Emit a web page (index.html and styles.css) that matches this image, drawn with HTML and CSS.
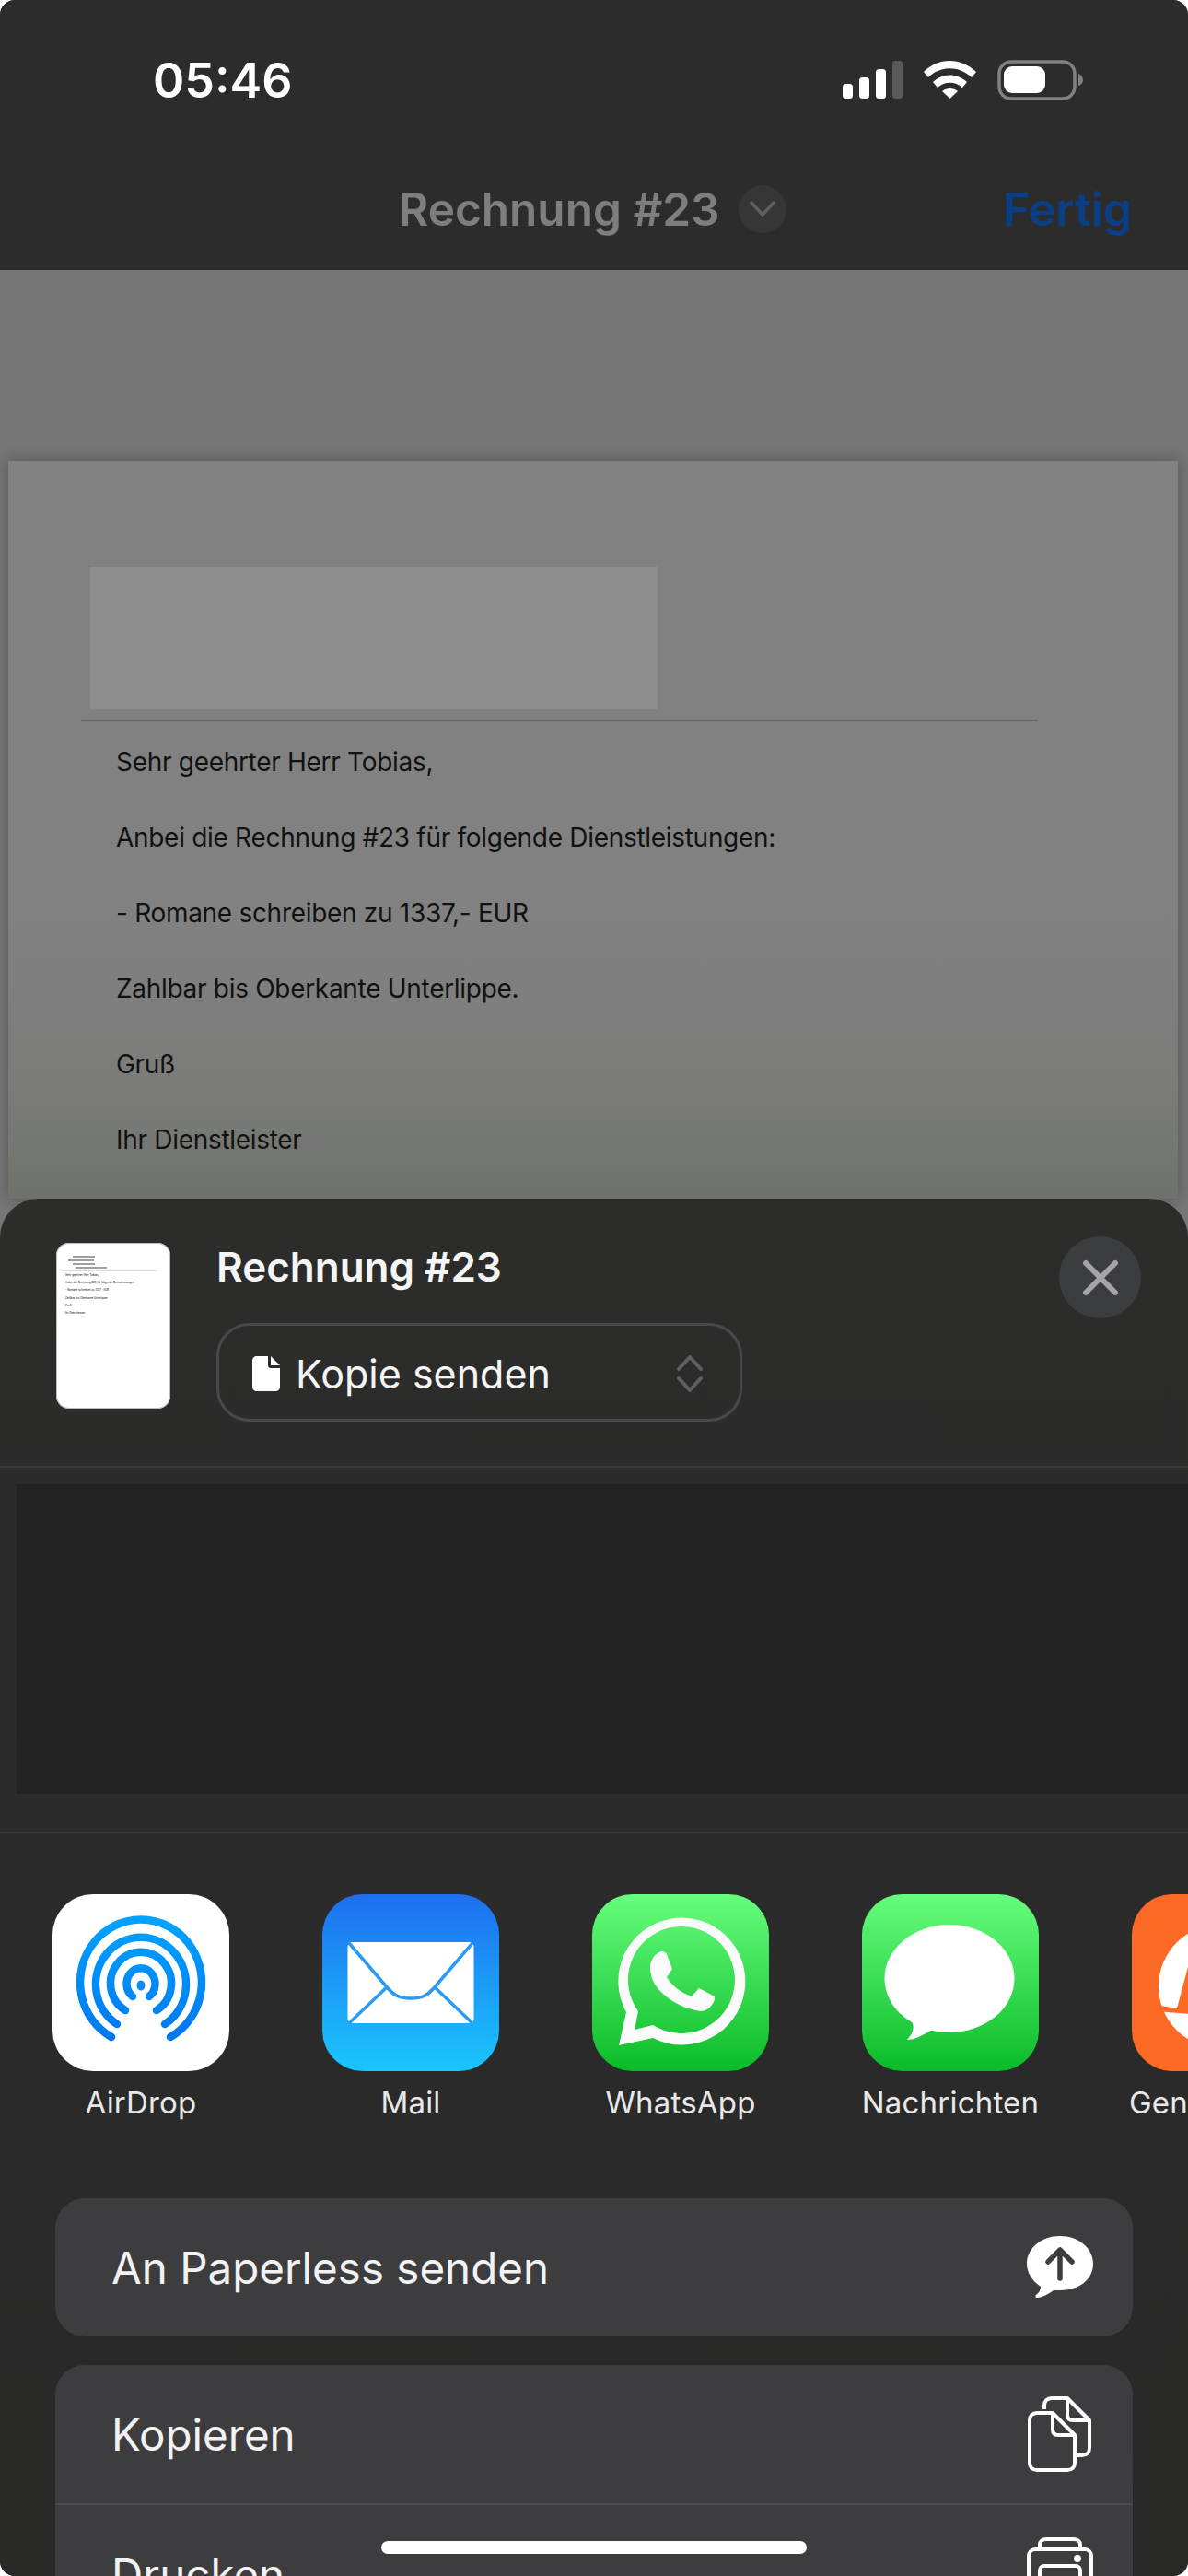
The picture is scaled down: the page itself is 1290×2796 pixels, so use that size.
FILE: index.html
```html
<!DOCTYPE html>
<html lang="de">
<head>
  <meta charset="UTF-8" />
  <meta name="viewport" content="width=device-width, initial-scale=1.0" />
  <title>Rechnung #23</title>
  <link rel="stylesheet" href="styles.css">
</head>
<body>
  <div class="screen">
    <header class="top">
      <div class="status">
        <span class="time">05:46</span>
        <svg class="status-icons" width="262" height="44" viewBox="0 0 262 44">
          <rect x="0" y="26" width="11" height="16" rx="3.5" fill="#fff"/>
          <rect x="18" y="19" width="11" height="23" rx="3.5" fill="#fff"/>
          <rect x="36" y="10" width="11" height="32" rx="3.5" fill="#fff"/>
          <rect x="54" y="1" width="11" height="41" rx="3.5" fill="#5a5a5a"/>
          <path d="M88 13 C104 -3 128 -3 145 13 L140 19 C126 6 106 6 93 19 Z M98 24 C109 14 124 14 135 24 L130 30 C122 23 111 23 103 30 Z M108 34 C113 30 120 30 125 34 L116.500 42 Z" fill="#fff"/>
          <rect x="170" y="2" width="82" height="40" rx="13" fill="none" stroke="#808080" stroke-width="3.500"/>
          <rect x="175" y="7" width="45" height="29" rx="9" fill="#fff"/>
          <path d="M256 15 C259 16 261 19 261 22 C261 25 259 27 256 28 Z" fill="#808080"/>
        </svg>
      </div>
      <div class="nav">
        <div class="nav-title">
          <span>Rechnung #23</span>
          <span class="nav-chevron">
            <svg width="30" height="18" viewBox="0 0 30 18"><path d="M3 2 L15 15 L27 2" fill="none" stroke="#5f5f5f" stroke-width="3.500" stroke-linecap="round" stroke-linejoin="round"/></svg>
          </span>
        </div>
        <span class="nav-done">Fertig</span>
      </div>
    </header>

    <main class="viewer">
      <article class="doc">
        <div class="doc-logo"></div>
        <hr class="doc-rule">
        <p>Sehr geehrter Herr Tobias,</p>
        <p>Anbei die Rechnung #23 für folgende Dienstleistungen:</p>
        <p>- Romane schreiben zu 1337,- EUR</p>
        <p>Zahlbar bis Oberkante Unterlippe.</p>
        <p>Gruß</p>
        <p>Ihr Dienstleister</p>
      </article>
    </main>

    <section class="sheet">
      <div class="sheet-head">
        <div class="thumb">
          <div class="thumb-addr"></div>
          <div class="thumb-addr short"></div>
          <div class="thumb-addr"></div>
          <div class="thumb-addr wide"></div>
          <hr class="thumb-rule">
          <p>Sehr geehrter Herr Tobias,</p>
          <p>Anbei die Rechnung #23 für folgende Dienstleistungen:</p>
          <p>- Romane schreiben zu 1337,- EUR</p>
          <p>Zahlbar bis Oberkante Unterlippe.</p>
          <p>Gruß</p>
          <p>Ihr Dienstleister</p>
        </div>
        <div class="head-info">
          <div class="head-title">Rechnung #23</div>
          <div class="mode-pill">
            <svg width="30" height="38" viewBox="0 0 30 38"><path d="M5 0 H17 V10 C17 12 18 13 20 13 H30 V33 C30 36 28 38 25 38 H5 C2 38 0 36 0 33 V5 C0 2 2 0 5 0 Z M20 0 L30 10 H20 Z" fill="#fff"/></svg>
            <span>Kopie senden</span>
            <svg class="mode-arrows" width="28" height="40" viewBox="0 0 28 40"><path d="M2 15 L14 2 L26 15 M2 25 L14 38 L26 25" fill="none" stroke="#5f5f61" stroke-width="4" stroke-linecap="round" stroke-linejoin="round"/></svg>
          </div>
        </div>
        <button class="close-btn">
          <svg width="40" height="40" viewBox="0 0 40 40"><path d="M4 4 L36 36 M36 4 L4 36" fill="none" stroke="#a5a5a8" stroke-width="6" stroke-linecap="round"/></svg>
        </button>
      </div>

      <div class="people">
        <div class="people-box"></div>
      </div>

      <div class="apps">
        <div class="app">
          <svg class="app-icon" viewBox="0 0 192 192">
            <defs>
              <linearGradient id="airBlue" gradientUnits="userSpaceOnUse" x1="0" y1="30" x2="0" y2="160">
                <stop offset="0" stop-color="#00a2ff"/>
                <stop offset="1" stop-color="#0076ee"/>
              </linearGradient>
            </defs>
            <rect width="192" height="192" rx="44" fill="#fff"/>
            <g fill="none" stroke="url(#airBlue)" stroke-width="8.500" stroke-linecap="round">
              <path d="M64 155 A66 68 0 1 1 128 155"/>
              <path d="M70 141 A49 51 0 1 1 122 141"/>
              <path d="M79 126 A33 34 0 1 1 113 126"/>
              <path d="M87 111 A15.500 17 0 1 1 105 111"/>
            </g>
            <ellipse cx="96" cy="99" rx="4.500" ry="5.500" fill="#0a8cf8"/>
          </svg>
          <span class="app-label">AirDrop</span>
        </div>
        <div class="app">
          <svg class="app-icon" viewBox="0 0 192 192">
            <defs>
              <linearGradient id="mailBlue" x1="0" y1="0" x2="0" y2="1">
                <stop offset="0" stop-color="#1e6ff0"/>
                <stop offset="1" stop-color="#1ac6fd"/>
              </linearGradient>
            </defs>
            <rect width="192" height="192" rx="44" fill="url(#mailBlue)"/>
            <rect x="27.500" y="52" width="137" height="88" rx="5" fill="#fff"/>
            <path d="M29 53 L71 102 C78 110 84 113 96 113 C108 113 114 110 121 102 L163 53 M71 100 L29 140 M121 100 L163 140" fill="none" stroke="#2a9af3" stroke-width="3.500"/>
          </svg>
          <span class="app-label">Mail</span>
        </div>
        <div class="app">
          <svg class="app-icon" viewBox="0 0 192 192">
            <defs>
              <linearGradient id="appGreen" x1="0" y1="0" x2="0" y2="1">
                <stop offset="0" stop-color="#66fd7c"/>
                <stop offset="1" stop-color="#0bbb29"/>
              </linearGradient>
            </defs>
            <rect width="192" height="192" rx="44" fill="url(#appGreen)"/>
            <path d="M29 164 L37 128 A69 69 0 1 1 66 156 Z M50 127 L46 147 L66 142 A58 58 0 1 0 50 127 Z" fill="#fafafa" fill-rule="evenodd"/>
            <path d="M75 62 C78 62 80 63 81 65 L87 81 L81 90 C87 100 97 107 108 111 L116 102 L133 111 C134 118 126 127 118 127 C92 124 66 104 64 87 C61 78 64 66 75 62 Z" fill="#fafafa"/>
          </svg>
          <span class="app-label">WhatsApp</span>
        </div>
        <div class="app">
          <svg class="app-icon" viewBox="0 0 192 192">
            <rect width="192" height="192" rx="44" fill="url(#appGreen)"/>
            <ellipse cx="95" cy="91.500" rx="70.500" ry="58.500" fill="#fff"/>
            <path d="M54 138 C58 146 54 152 49 158 C58 158 66 153 76 147 Z" fill="#fff"/>
          </svg>
          <span class="app-label">Nachrichten</span>
        </div>
        <div class="app">
          <svg class="app-icon" viewBox="0 0 192 192">
            <rect width="192" height="192" rx="44" fill="#fd6a25"/>
            <circle cx="96" cy="100" r="67" fill="#fff"/>
            <path d="M20 119 L49 124 L66 60 L130 60 L130 135 L38 128 L20 126 Z" fill="#fd6a25"/>
          </svg>
          <span class="app-label">Genius Scan</span>
        </div>
      </div>

      <div class="action-group">
        <div class="action">
          <span>An Paperless senden</span>
          <svg class="action-icon" width="72" height="68" viewBox="0 0 72 68">
            <path d="M36 0 C56 0 72 13 72 30 C72 47 57 59 36 59 C33 59 31 59 29 59 C23 63 17 67 11 67 C9 67 9 65 10 64 C13 62 15 59 15 55 C6 49 0 40 0 30 C0 13 16 0 36 0 Z" fill="#fff"/>
            <path d="M36 46 V15 M23 28 L36 15 L49 28" fill="none" stroke="#3d3d3f" stroke-width="5.500" stroke-linecap="round" stroke-linejoin="round"/>
          </svg>
        </div>
      </div>

      <div class="action-group">
        <div class="action">
          <span>Kopieren</span>
          <svg class="action-icon" width="72" height="82" viewBox="0 0 72 82">
            <g fill="none" stroke="#fff" stroke-width="4" stroke-linejoin="round">
              <path d="M19 14 V10 C19 5 22 2 27 2 H44 L68 26 V56 C68 61 65 64 60 64 H53"/>
              <path d="M44 2 V20 C44 24 46 26 50 26 H68"/>
              <path d="M11 18 H28 L52 42 V72 C52 77 49 80 44 80 H11 C6 80 3 77 3 72 V26 C3 21 6 18 11 18 Z" fill="#3d3d3f"/>
              <path d="M28 18 V36 C28 40 30 42 34 42 H52"/>
            </g>
          </svg>
        </div>
        <div class="action">
          <span>Drucken</span>
          <svg class="action-icon" width="72" height="80" viewBox="0 0 72 80">
            <g fill="none" stroke="#fff" stroke-width="4" stroke-linejoin="round">
              <path d="M14 12 V8 C14 4 17 2 21 2 H51 C55 2 58 4 58 8 V12"/>
              <rect x="2" y="13" width="68" height="52" rx="7"/>
              <rect x="14" y="31" width="44" height="40" rx="5" fill="#3d3d3f"/>
            </g>
            <circle cx="55" cy="23" r="4" fill="#fff"/>
          </svg>
        </div>
      </div>
    </section>

    <div class="home-bar"></div>
  </div>
</body>
</html>
```

FILE: styles.css
```css
/* Seite */
body {
  margin: 0;
  background-color: #fff;
  font-family: Inter, "Noto Sans", sans-serif;
}

.screen {
  position: relative;
  width: 1290px;
  height: 2796px;
  border-radius: 16px;
  overflow: hidden;
  background-color: #767676;
}

/* Statusleiste und Navigation */
.top {
  height: 293px;
  background-color: #2c2c2c;
}

.status {
  display: flex;
  justify-content: space-between;
  align-items: center;
  padding: 54px 113px 0 166px;
  height: 66px;
}

.time {
  color: #fff;
  font-size: 52px;
  font-weight: 600;
}

.nav {
  position: relative;
  display: flex;
  justify-content: flex-end;
  align-items: center;
  margin-top: 73px;
  height: 68px;
  padding-right: 61px;
}

.nav-title {
  position: absolute;
  left: 433px;
  display: flex;
  align-items: center;
  gap: 20px;
  color: #7e7e7e;
  font-size: 49.500px;
  font-weight: 600;
}

.nav-chevron {
  display: flex;
  align-items: center;
  justify-content: center;
  width: 52px;
  height: 52px;
  border-radius: 50%;
  background-color: #363636;
}

.nav-done {
  color: #0a3f85;
  font-size: 50px;
  font-weight: 600;
}

/* Dokument */
.viewer {
  padding: 207px 11px 0 9px;
}

.doc {
  height: 686px;
  padding: 115px 0 0 89px;
  background-image: linear-gradient(to bottom, #818181, #818181 60%, #7b7c7a 85%, #6e726c 100%);
  box-shadow: 0 0 16px rgba(0, 0, 0, 0.3);
  color: #111;
  font-size: 28px;
  letter-spacing: -0.3px;
}

.doc-logo {
  width: 616px;
  height: 155px;
  background-color: #8e8e8e;
}

.doc-rule {
  width: 1039px;
  margin: 11px 0 3px -10px;
  border: none;
  border-top: 2px solid #666;
}

.doc p {
  margin: 0 0 0 28px;
  height: 82px;
  line-height: 82px;
}

/* Freigabe-Blatt */
.sheet {
  position: absolute;
  top: 1301px;
  left: 0;
  right: 0;
  bottom: 0;
  border-radius: 42px 42px 0 0;
  background-image: linear-gradient(to bottom, #2c2c2b, #2b2b2b 50%, #282827);
  overflow: hidden;
}

.sheet-head {
  display: flex;
  align-items: flex-start;
  height: 249px;
  padding: 41px 51px 0 61px;
  border-bottom: 2px solid #3c3c3c;
}

.thumb {
  box-sizing: border-box;
  width: 124px;
  height: 180px;
  margin-top: 7px;
  padding: 14px 10px 0;
  border-radius: 14px;
  background-color: #fff;
  box-shadow: inset 0 0 0 1px #bbb;
  overflow: hidden;
}

.thumb-addr {
  width: 24px;
  height: 1.500px;
  margin: 0 0 2.500px 8px;
  background-color: #a0a0a0;
}

.thumb-addr.short {
  width: 28px;
  margin-left: 3px;
}

.thumb-addr.wide {
  width: 34px;
  margin-left: 11px;
}

.thumb-rule {
  width: 104px;
  margin: 1px 0 0 -4px;
  border: none;
  border-top: 1px solid #ddd;
}

.thumb p {
  margin: 0;
  height: 8.200px;
  color: #000;
  font-size: 2.900px;
  line-height: 8.200px;
  white-space: nowrap;
}

.head-info {
  margin-left: 50px;
}

.head-title {
  margin-top: 6px;
  color: #f5f5f5;
  font-size: 44px;
  font-weight: 600;
  line-height: 54px;
}

.mode-pill {
  box-sizing: border-box;
  display: flex;
  align-items: center;
  width: 571px;
  height: 107px;
  margin-top: 34px;
  padding: 2px 40px 0 36px;
  border: 3px solid #48494b;
  border-radius: 36px;
  color: #f5f5f5;
  font-size: 43px;
}

.mode-pill span {
  margin-left: 17px;
}

.mode-arrows {
  margin-left: auto;
}

.close-btn {
  display: flex;
  align-items: center;
  justify-content: center;
  width: 89px;
  height: 89px;
  margin-left: auto;
  padding: 0;
  border: none;
  border-radius: 50%;
  background-color: #3c3d3f;
}

.people {
  padding: 18px 0 41px 18px;
  border-bottom: 2px solid #3a3a3a;
}

.people-box {
  height: 336px;
  background-color: #232323;
}

/* Apps */
.apps {
  display: flex;
  gap: 101px;
  padding: 66px 0 0 57px;
}

.app {
  display: flex;
  flex-direction: column;
  align-items: center;
  flex: none;
  width: 192px;
}

.app-icon {
  display: block;
  width: 192px;
  height: 192px;
}

.app-label {
  margin-top: 14px;
  color: #e8e8e8;
  font-size: 33px;
  letter-spacing: 0.2px;
  line-height: 40px;
  white-space: nowrap;
}

/* Aktionen */
.action-group {
  margin: 31px 60px 0;
  border-radius: 32px;
  background-color: #3d3d3f;
  overflow: hidden;
}

.apps + .action-group {
  margin-top: 84px;
}

.action {
  display: flex;
  align-items: center;
  justify-content: space-between;
  height: 150px;
  padding: 0 43px 0 61px;
  color: #f2f2f2;
  font-size: 47.500px;
}

.action + .action {
  border-top: 2px solid #4b4b4d;
}

.action-icon {
  flex: none;
}

.home-bar {
  position: absolute;
  left: 414px;
  top: 2758px;
  width: 462px;
  height: 14px;
  border-radius: 7px;
  background-color: #fff;
}
```
